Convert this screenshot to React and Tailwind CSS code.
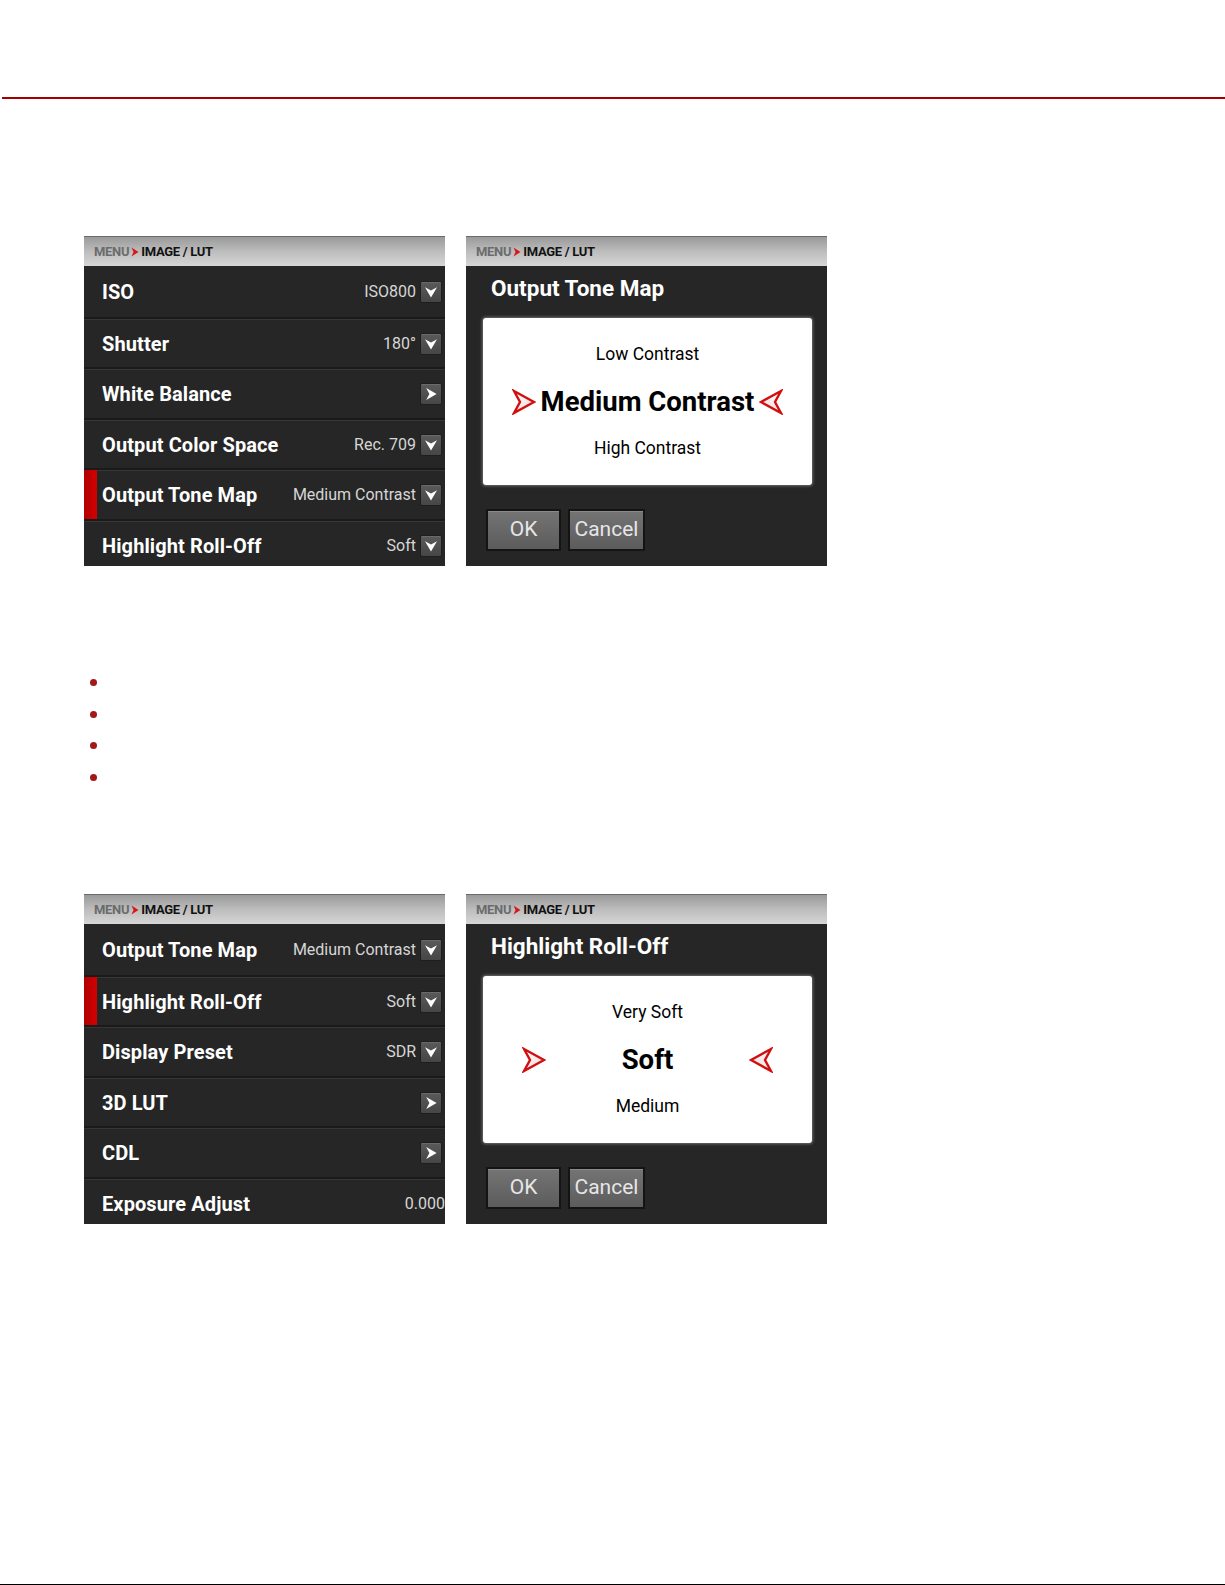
import React from 'react';

const FONT = { fontFamily: 'Roboto, "Liberation Sans", sans-serif' };

const DownIcon = () => (
  <svg viewBox="0 0 20 20" className="h-[16px] w-[16px]">
    <path d="M2.5 4 L10 17 L17.5 4 L10 8 Z" fill="#ffffff" />
  </svg>
);

const RightIcon = () => (
  <svg viewBox="0 0 20 20" className="h-[16px] w-[16px]">
    <path d="M4 2.5 L17 10 L4 17.5 L8 10 Z" fill="#ffffff" />
  </svg>
);

const IconBox = ({ kind }) => (
  <div className="flex h-[22px] w-[22px] items-center justify-center rounded-[2px] border border-[#1e1e1e] bg-gradient-to-b from-[#5a5a5a] to-[#464646] shadow-[inset_0_1px_0_#6a6a6a]">
    {kind === 'down' ? <DownIcon /> : <RightIcon />}
  </div>
);

const Breadcrumb = () => (
  <div className="flex h-[30px] shrink-0 items-center border-t border-[#6a6a6a] bg-gradient-to-b from-[#9a9a9a] via-[#bdbdbd] to-[#d6d6d6] pl-[10px] text-[13px] font-bold tracking-[-0.3px]">
    <span className="text-[#6b6b6b]">MENU</span>
    <svg viewBox="0 0 8 10" className="mx-[2px] h-[10px] w-[8px]">
      <path d="M0.5 0.5 L7.5 5 L0.5 9.5 L2.5 5 Z" fill="#d81818" />
    </svg>
    <span className="text-[#111111]">IMAGE / LUT</span>
  </div>
);

const MenuRow = ({ label, value, icon, active, first }) => (
  <div className={first ? 'flex h-[50.5px] shrink-0 items-stretch' : 'flex h-[50.5px] shrink-0 items-stretch border-t-2 border-t-[#1a1a1a] shadow-[inset_0_1px_0_#363636]'}>
    <div className={active ? 'w-[13px] bg-gradient-to-r from-[#b00000] to-[#d40000]' : 'w-[13px]'} />
    <div className={icon ? 'flex flex-1 items-center justify-between pl-[5px] pr-[3px] pt-[2px]' : 'flex flex-1 items-center justify-between pl-[5px] pt-[2px]'}>
      <span className="text-[20px] font-bold tracking-[0.1px] text-white">{label}</span>
      <div className="flex items-center gap-[4px]">
        {value && <span className="text-[16px] text-[#d6d6d6]">{value}</span>}
        {icon && <IconBox kind={icon} />}
      </div>
    </div>
  </div>
);

const MenuPanel = ({ rows }) => (
  <div className="flex h-[330px] w-[361px] flex-col overflow-hidden bg-[#262626]">
    <Breadcrumb />
    {rows.map((row, i) => (
      <MenuRow key={row.label} first={i === 0} {...row} />
    ))}
  </div>
);

const Dart = ({ flip }) => (
  <svg viewBox="0 0 24 26" className={flip ? 'h-[26px] w-[24px] -scale-x-100' : 'h-[26px] w-[24px]'}>
    <defs>
      <linearGradient id={flip ? 'dartL' : 'dartR'} x1="0" y1="0" x2="1" y2="1">
        <stop offset="0" stopColor="#ffffff" />
        <stop offset="1" stopColor="#f2d6d6" />
      </linearGradient>
    </defs>
    <path
      d="M2 2 L22 13 L2 24 L8 13 Z"
      fill={`url(#${flip ? 'dartL' : 'dartR'})`}
      stroke="#d01010"
      strokeWidth="2.4"
      strokeLinejoin="miter"
    />
  </svg>
);

const Button = ({ children, width }) => (
  <div className={`flex h-[42px] items-center justify-center border-2 border-[#141414] bg-gradient-to-b from-[#747474] to-[#5c5c5c] text-[21px] text-[#e6e6e6] shadow-[inset_0_1px_0_#8a8a8a] ${width}`}>
    {children}
  </div>
);

const DialogPanel = ({ title, above, current, below, gap }) => (
  <div className="h-[330px] w-[361px] overflow-hidden bg-[#262626]">
    <Breadcrumb />
    <div className="flex h-[46px] items-center pl-[25px] text-[22.5px] font-bold text-white">{title}</div>
    <div className="ml-[17px] mr-[15px] mt-[6px] flex h-[167px] flex-col items-center justify-center rounded-[3px] bg-white shadow-[0_0_3px_1px_rgba(120,120,120,0.9)]">
      <div className="flex h-[47px] items-center text-[17.5px] text-black">{above}</div>
      <div className={`flex h-[47px] items-center ${gap}`}>
        <Dart />
        <span className="text-[27.5px] font-bold text-black">{current}</span>
        <Dart flip />
      </div>
      <div className="flex h-[47px] items-center text-[17.5px] text-black">{below}</div>
    </div>
    <div className="ml-[20px] mt-[24px] flex gap-[7px]">
      <Button width="w-[75px]">OK</Button>
      <Button width="w-[77px]">Cancel</Button>
    </div>
  </div>
);

const topRows = [
  { label: 'ISO', value: 'ISO800', icon: 'down' },
  { label: 'Shutter', value: '180°', icon: 'down' },
  { label: 'White Balance', icon: 'right' },
  { label: 'Output Color Space', value: 'Rec. 709', icon: 'down' },
  { label: 'Output Tone Map', value: 'Medium Contrast', icon: 'down', active: true },
  { label: 'Highlight Roll-Off', value: 'Soft', icon: 'down' },
];

const bottomRows = [
  { label: 'Output Tone Map', value: 'Medium Contrast', icon: 'down' },
  { label: 'Highlight Roll-Off', value: 'Soft', icon: 'down', active: true },
  { label: 'Display Preset', value: 'SDR', icon: 'down' },
  { label: '3D LUT', icon: 'right' },
  { label: 'CDL', icon: 'right' },
  { label: 'Exposure Adjust', value: '0.000' },
];

const App = () => {
  return (
    <div className="flex min-h-[1585px] w-[1225px] flex-col bg-white" style={FONT}>
      <div className="h-[97px]" />
      <div className="ml-[2px] h-[2px] bg-[#a40000]" />

      <div className="mt-[137px] flex gap-[21px] pl-[84px]">
        <MenuPanel rows={topRows} />
        <DialogPanel
          title="Output Tone Map"
          above="Low Contrast"
          current="Medium Contrast"
          below="High Contrast"
          gap="gap-[5px]"
        />
      </div>

      <ul className="mt-[101px] pl-[90px]">
        {[0, 1, 2, 3].map((i) => (
          <li key={i} className="flex h-[31.5px] items-center">
            <span className="h-[7px] w-[7px] rounded-full bg-[#a01818]" />
          </li>
        ))}
      </ul>

      <div className="mt-[101px] flex gap-[21px] pl-[84px]">
        <MenuPanel rows={bottomRows} />
        <DialogPanel
          title="Highlight Roll-Off"
          above="Very Soft"
          current="Soft"
          below="Medium"
          gap="gap-[76px]"
        />
      </div>

      <div className="mt-auto h-px bg-black" />
    </div>
  );
};

export default App;
